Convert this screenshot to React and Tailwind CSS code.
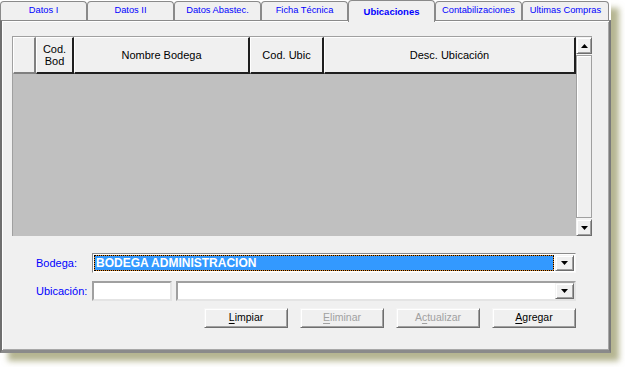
import React from "react";

const Tri = ({ up }) => (
  <svg width="7" height="4" viewBox="0 0 7 4" className="block">
    {up ? <path d="M3.5 0 L7 4 L0 4 Z" fill="#000" /> : <path d="M0 0 L7 0 L3.5 4 Z" fill="#000" />}
  </svg>
);

const raised =
  "bg-[#f0f0f0] border border-t-[#f4f4f4] border-l-[#f4f4f4] border-r-[#6e6e6e] border-b-[#6e6e6e] shadow-[inset_1px_1px_0_#ffffff,inset_-1px_-1px_0_#a0a0a0]";

const DropBtn = () => (
  <div className={`w-[19px] h-full flex items-center justify-center ${raised}`}>
    <Tri />
  </div>
);

const Btn = ({ u, rest, pre = "", disabled }) => (
  <div
    className={`w-[84px] h-[20px] flex items-center justify-center text-[10.5px] ${raised} ${
      disabled ? "text-[#a0a0a0]" : "text-black"
    }`}
  >
    {pre}
    <span className="underline underline-offset-[2px]">{u}</span>
    {rest}
  </div>
);

export default function App() {
  const tabs = [
    "Datos I",
    "Datos II",
    "Datos Abastec.",
    "Ficha Técnica",
    "Ubicaciones",
    "Contabilizaciones",
    "Ultimas Compras",
  ];
  const hdr =
    "h-full flex items-center justify-center text-center text-[11px] leading-[12px] text-black bg-[#f0f0f0] border-t border-l border-t-white border-l-white border-r-[2px] border-b-[2px] border-r-[#1e1e1e] border-b-[#1e1e1e]";
  return (
    <div className="w-[625px] h-[367px] bg-white font-['Liberation_Sans',Arial,sans-serif] overflow-hidden">
      <div className="w-[611px] h-[353px] flex flex-col shadow-[8px_8px_6px_rgba(120,120,55,0.55)]">
        <div className="h-[20px] flex items-start relative z-10 bg-white">
          {tabs.map((t, i) =>
            i === 4 ? (
              <div
                key={t}
                className="w-[87px] h-[22px] bg-[#f0f0f0] border border-b-0 border-[#8a8a8a] rounded-t-[4px] flex items-center justify-center pt-[2px] text-[9.5px] font-bold text-[#0000ff]"
              >
                {t}
              </div>
            ) : (
              <div
                key={t}
                className="w-[87px] h-[19px] mt-[1px] bg-[#f0f0f0] border border-b-0 border-[#8a8a8a] rounded-t-[4px] flex items-center justify-center text-[9.3px] text-[#0000ff]"
              >
                {t}
              </div>
            )
          )}
        </div>
        <div className="flex-1 flex flex-col bg-[#f0f0f0] border-t border-t-[#8a8a8a] border-l-2 border-l-[#6f6f6f] border-r-2 border-r-[#7a7a7a] border-b-[3px] border-b-[#8a8a8a] shadow-[inset_1px_1px_0_#ffffff,inset_-1px_-1px_0_#a8a8a8] pt-[15px]">
          {/* grid */}
          <div className="ml-[10px] w-[580px] h-[200px] flex border-t border-l border-[#a0a0a0]">
            <div className="w-[563px] flex flex-col">
              <div className="h-[37px] flex">
                <div className="w-[23px] h-full bg-[#f0f0f0] border-t border-l border-white border-r-2 border-b-2 border-r-[#808080] border-b-[#808080]" />
                <div className={`w-[38px] ${hdr}`}>
                  Cod.
                  <br />
                  Bod
                </div>
                <div className={`w-[176px] ${hdr}`}>Nombre Bodega</div>
                <div className={`w-[74px] ${hdr}`}>Cod. Ubic</div>
                <div className={`w-[252px] ${hdr}`}>Desc. Ubicación</div>
              </div>
              <div className="flex-1 bg-[#c0c0c0]" />
            </div>
            <div className="w-[16px] flex flex-col bg-[#f4f4f4]">
              <div className={`h-[17px] flex items-center justify-center ${raised}`}>
                <Tri up />
              </div>
              <div className="flex-1 mt-[1px] mb-[1px] bg-[#f0f0f0] border border-[#a0a0a0] shadow-[inset_1px_1px_0_#ffffff]" />
              <div className={`h-[17px] flex items-center justify-center ${raised}`}>
                <Tri />
              </div>
            </div>
          </div>
          {/* Bodega row */}
          <div className="mt-[17px] h-[20px] flex items-center pl-[34px]">
            <div className="w-[56px] text-[11px] text-[#0000ff]">Bodega:</div>
            <div className="w-[484px] h-[20px] flex border border-t-[#8a8a8a] border-l-[#8a8a8a] border-r-[#f8f8f8] border-b-[#f8f8f8] bg-white p-[1px] gap-[1px]">
              <div className="flex-1 bg-[#e08a2a]">
                <div className="h-full border border-dotted border-black bg-[#3399ff] bg-clip-padding flex items-center pl-[1px] text-[12px] font-bold text-white leading-none">
                  BODEGA ADMINISTRACION
                </div>
              </div>
              <DropBtn />
            </div>
          </div>
          {/* Ubicacion row */}
          <div className="mt-[8px] h-[20px] flex items-center pl-[34px]">
            <div className="w-[56px] text-[11px] text-[#0000ff]">Ubicación:</div>
            <div className="w-[80px] h-[20px] bg-white border-2 border-t-[#a0a0a0] border-l-[#a0a0a0] border-r-[#e4e4e4] border-b-[#e4e4e4]" />
            <div className="ml-[4px] w-[400px] h-[20px] flex bg-white border-2 border-t-[#a0a0a0] border-l-[#a0a0a0] border-r-[#e4e4e4] border-b-[#e4e4e4]">
              <div className="flex-1" />
              <DropBtn />
            </div>
          </div>
          {/* buttons */}
          <div className="mt-[7px] flex gap-[12px] ml-[202px]">
            <Btn u="L" rest="impiar" />
            <Btn u="E" rest="liminar" disabled />
            <Btn pre="A" u="c" rest="tualizar" disabled />
            <Btn u="A" rest="gregar" />
          </div>
        </div>
      </div>
    </div>
  );
}
